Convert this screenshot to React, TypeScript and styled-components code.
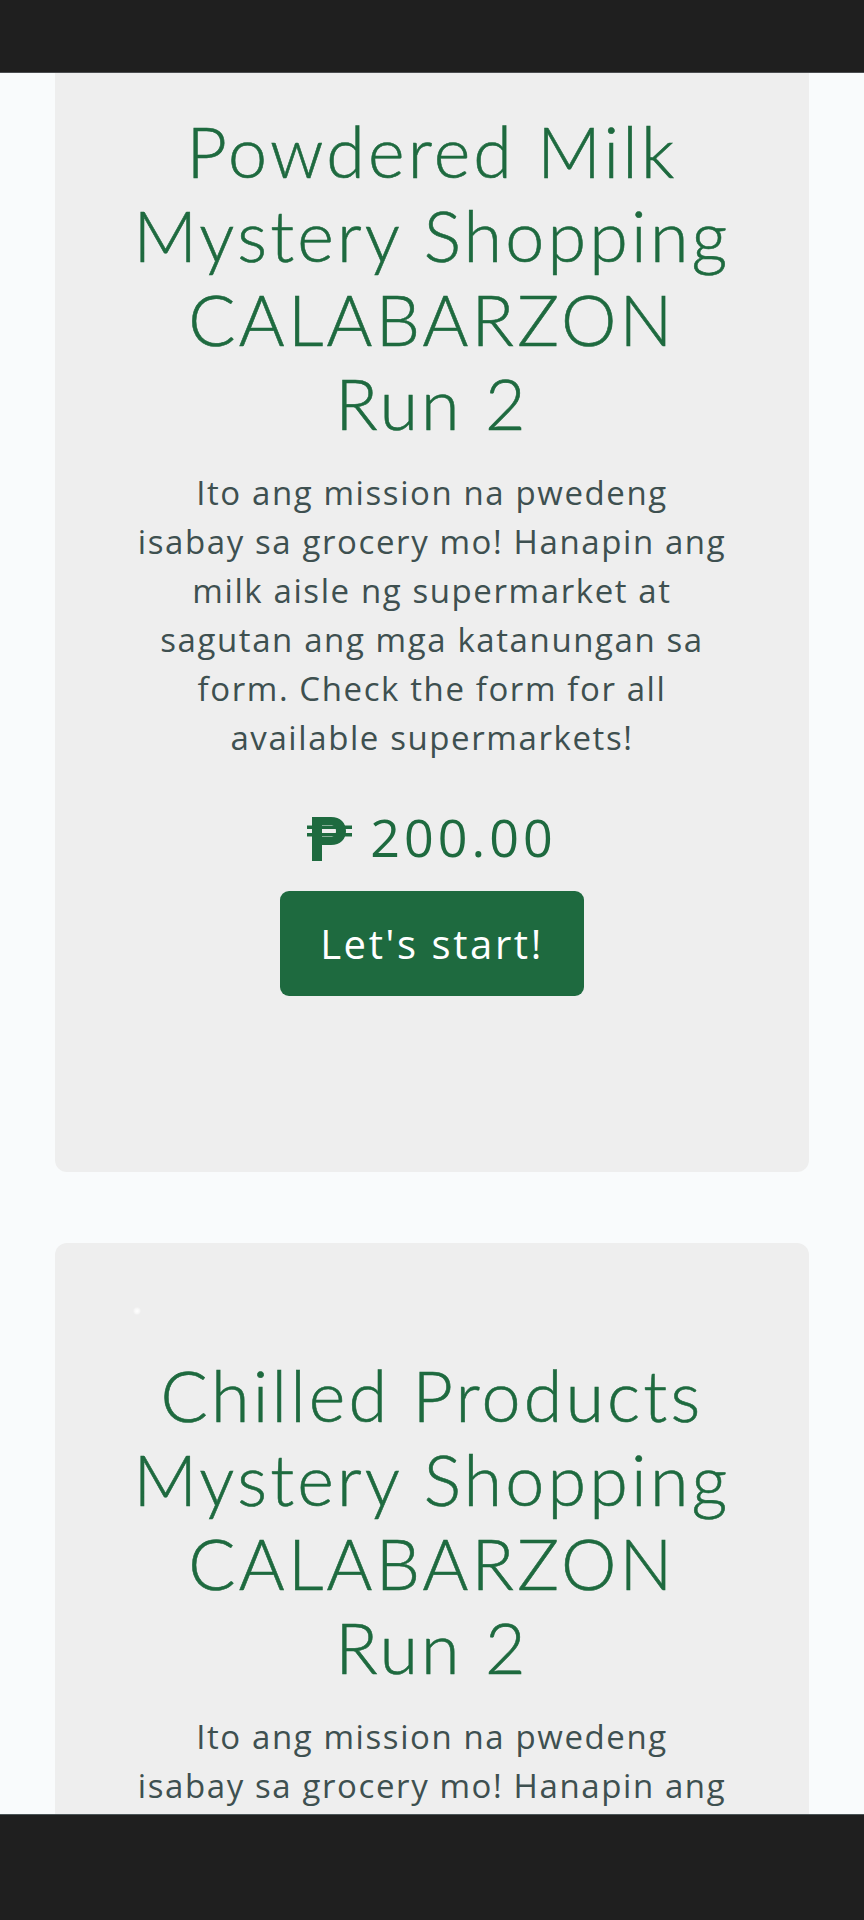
import React from "react";
import styled, { createGlobalStyle } from "styled-components";

const GREEN = "#1e6a3f";

const GlobalStyle = createGlobalStyle`
  html, body {
    margin: 0;
    padding: 0;
    background: #f9fbfc;
  }
  * { box-sizing: border-box; }
`;

const TopBar = styled.header`
  position: fixed;
  top: 0;
  left: 0;
  right: 0;
  height: 73px;
  background: #1f1f1f;
  border-bottom: 1px solid #4b4d50;
  z-index: 10;
`;

const BottomBar = styled.footer`
  position: fixed;
  bottom: 0;
  left: 0;
  right: 0;
  height: 106px;
  background: #1f1f1f;
  border-top: 1px solid #4b5557;
  z-index: 10;
`;

const Feed = styled.main`
  display: flex;
  flex-direction: column;
  gap: 71px;
  padding: 0 55px 200px;
  margin-top: -1px;
`;

const Card = styled.section`
  background: #eeeeee;
  border-radius: 12px;
  padding: 0 60px 176px;
  display: flex;
  flex-direction: column;
  align-items: center;
  text-align: center;
`;

const Loader = styled.span`
  align-self: flex-start;
  width: 8px;
  height: 8px;
  margin: 64px 0 0 18px;
  border-radius: 50%;
  background: radial-gradient(circle, #ffffff 0%, rgba(255, 255, 255, 0.6) 40%, rgba(255, 255, 255, 0) 75%);
`;

const Title = styled.h2`
  margin: 38px 12px 0;
  font-family: Lato, "Open Sans", sans-serif;
  font-weight: 300;
  font-size: 70px;
  line-height: 84px;
  letter-spacing: 3.2px;
  color: ${GREEN};
  -webkit-text-stroke: 0.6px ${GREEN};
`;

const Blurb = styled.p`
  margin: 23px 0 0;
  font-family: "Open Sans", "Noto Sans", sans-serif;
  font-weight: 400;
  font-size: 33px;
  line-height: 49px;
  letter-spacing: 1.6px;
  color: #3e5050;
`;

const Price = styled.div`
  margin-top: 47px;
  display: flex;
  align-items: flex-end;
  gap: 18px;
  height: 64px;
  padding-bottom: 10px;
  font-family: "Open Sans", sans-serif;
  font-weight: 400;
  font-size: 52px;
  line-height: 52px;
  letter-spacing: 4px;
  color: ${GREEN};
`;

const PesoIcon = styled.svg`
  width: 45px;
  height: 44px;
  flex: none;
  margin-bottom: 2px;
`;

const StartButton = styled.button`
  margin-top: 18px;
  width: 304px;
  height: 105px;
  border: none;
  border-radius: 9px;
  background: ${GREEN};
  color: #ffffff;
  font-family: "Open Sans", sans-serif;
  font-size: 40px;
  letter-spacing: 2.6px;
  cursor: pointer;
`;

const Peso = () => (
  <PesoIcon viewBox="0 0 45 44" fill={GREEN}>
    <path
      fillRule="evenodd"
      d="M5 0H24C33.5 0 39 6 39 14C39 22 33.5 28 24 28H15V44H5Z M15 8H23.5C27 8 29 10.5 29 14C29 17.5 27 20 23.5 20H15Z"
    />
    <rect x="0" y="8.5" width="45" height="3.5" />
    <rect x="0" y="16" width="45" height="3.5" />
  </PesoIcon>
);

const blurbLines = [
  "Ito ang mission na pwedeng",
  "isabay sa grocery mo! Hanapin ang",
  "milk aisle ng supermarket at",
  "sagutan ang mga katanungan sa",
  "form. Check the form for all",
  "available supermarkets!",
];

const missions = [
  { title: "Powdered Milk Mystery Shopping CALABARZON Run 2", price: "200.00" },
  { title: "Chilled Products Mystery Shopping CALABARZON Run 2", price: "200.00" },
];

const App = () => {
  return (
    <>
      <GlobalStyle />
      <TopBar />
      <Feed>
        {missions.map((m) => (
          <Card key={m.title}>
            <Loader />
            <Title>{m.title}</Title>
            <Blurb>
              {blurbLines.map((line, i) => (
                <React.Fragment key={i}>
                  {line}
                  {i < blurbLines.length - 1 && <br />}
                </React.Fragment>
              ))}
            </Blurb>
            <Price>
              <Peso />
              <span>{m.price}</span>
            </Price>
            <StartButton>Let's start!</StartButton>
          </Card>
        ))}
      </Feed>
      <BottomBar />
    </>
  );
};

export default App;
